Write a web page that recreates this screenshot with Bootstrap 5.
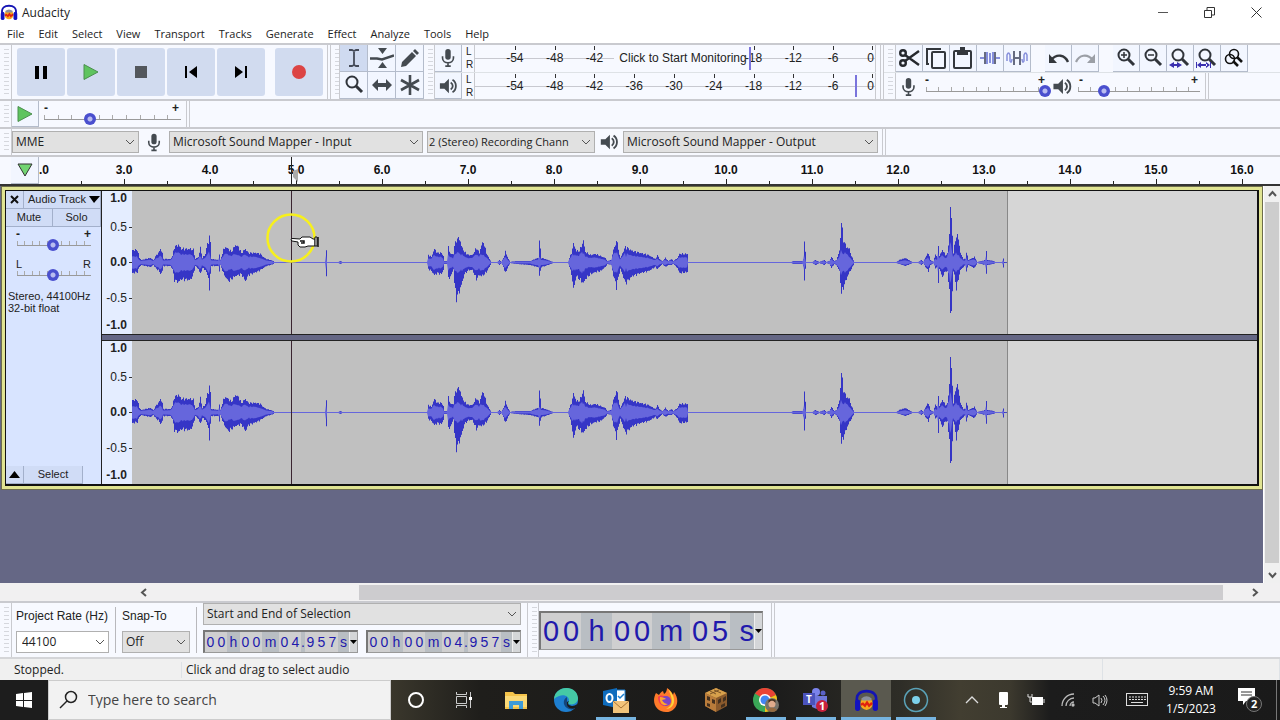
<!DOCTYPE html>
<html lang="en">
<head>
<meta charset="utf-8">
<meta name="viewport" content="width=device-width, initial-scale=1">
<title>Audacity</title>
<link href="https://cdn.jsdelivr.net/npm/bootstrap@5.3.0/dist/css/bootstrap.min.css" rel="stylesheet">
<script src="https://cdn.jsdelivr.net/npm/bootstrap@5.3.0/dist/js/bootstrap.bundle.min.js"></script>
<style>
:root{--ui:"Open Sans","Noto Sans",sans-serif;--ar:"Liberation Sans",Arial,sans-serif;--pane:#f7f9ff;--line:#c9cacf;--blue:#3f45cc}
body{font:12px/16px var(--ui);color:#222;background:var(--pane);overflow:hidden}
button,select,input{font:inherit;color:inherit}
button{border:0;padding:0;background:none}
svg{display:block;flex:none}
.titlebar{height:25px;background:#fff}
.titlebar .winbtn{width:47px;height:24px}
.menubar{height:18px;background:#fff;gap:14px;padding-left:7px;font-size:11px;line-height:17px}
.menubar a{color:#222;text-decoration:none;white-space:nowrap}
.arial{font-family:var(--ar)}
.toolrow{border-top:2px solid var(--line)}
.r56{height:56px}.r28{height:28px}
.grip{width:12px;flex:none;border-right:1px solid var(--line);background:repeating-linear-gradient(#d5d7dd 0 1px,transparent 1px 4px) 4px 4px/5px calc(100% - 8px) no-repeat}
.edge{width:4px;flex:none;border-left:1px solid var(--line);border-right:1px solid var(--line)}
.transport{gap:2px;padding-left:5px}
.tbtn{width:48px;height:48px;border-radius:3px;background:#d1dbef}
.toolgrid{grid-template-columns:repeat(3,28px);grid-template-rows:27px 27px}
.cellbtn{border-right:1px solid #b4bccb;border-bottom:1px solid #b4bccb;background:#f2f6ff;width:100%;height:100%;min-width:27px}
.cellbtn.on{background:#cfdaf0}
.meterrow{height:27px}
.mscale{flex:none;width:402px;position:relative;border-left:1px solid var(--line);border-right:1px solid var(--line);font:12px/14px var(--ar);padding-left:20px;background:linear-gradient(#c8c9d0,#c8c9d0) 0 13px/100% 1px no-repeat}
.mscale .ticks{display:grid;grid-template-columns:repeat(9,1fr);width:358px}
.mscale .lab{position:relative;text-align:center;padding-top:6px}
.mscale .lab::before{content:"";position:absolute;left:50%;top:1px;height:4px;border-left:1px solid #333}
.mscale .say{grid-column:span 3;padding-top:6px;text-align:center}
.mscale .say span{background:var(--pane);padding:0 5px;white-space:nowrap}
.mscale .zero{width:21px;text-align:right}
.mscale .zero::before{left:auto;right:1px}
.peak{position:absolute;top:2px;bottom:2px;width:2px;background:#7a74dc}
.sld{position:relative;height:27px;flex:none}
.sld::before{content:"";position:absolute;left:1px;right:1px;bottom:8px;height:5px;border-bottom:1px solid #999;background:repeating-linear-gradient(90deg,#aaa 0 1px,transparent 1px 10%)}
.sld .pm{position:absolute;top:0;font:bold 12px/14px var(--ar)}
.sld input{-webkit-appearance:none;appearance:none;position:absolute;left:0;bottom:3px;width:100%;height:12px;margin:0;background:none}
.sld input::-webkit-slider-thumb{-webkit-appearance:none;width:12px;height:12px;border-radius:50%;border:0;background:radial-gradient(circle,#b9bcf0 0 2px,#4a4fce 3px)}
.combo.form-select{font:inherit;padding:0 16px 0 3px;height:22px;border:1px solid #b0b0b0;border-radius:0;color:#222;background:#e1e1e1 url("data:image/svg+xml,%3Csvg xmlns='http://www.w3.org/2000/svg' viewBox='0 0 10 10'%3E%3Cpath d='M1 3l4 4 4-4' fill='none' stroke='%23555'/%3E%3C/svg%3E") right 3px center/10px 10px no-repeat;flex:none}
.combo.tight{padding:0 12px 0 1px;font-size:11px}
.combo.form-select.bg-white{padding-left:5px}
.ruler{height:31px;font:bold 12px/16px var(--ar);color:#111;border-bottom:2px solid #333}
.ruler .secs{overflow:hidden;position:relative;flex:1;min-width:0}
.ruler .sec{flex:0 0 86px;text-align:center;padding-top:5px;position:relative}
.ruler .sec::after{content:"";position:absolute;left:50%;bottom:0;height:5px;border-left:1px solid #222}
.ruler .sec::before{content:"";position:absolute;left:0;bottom:0;height:3px;border-left:1px solid #222}
.ruler .sec.part{flex-basis:42px;text-align:left}
.ruler .sec.part::after,.ruler .sec.part::before{display:none}
.canvas{background:#656785;min-width:0}
.track{border:1px solid #6d6d4c;background:#e0e492;padding:3px;margin:0 0 0 1px}
.track-in{border:1px solid #111;border-right-width:2px;border-bottom-width:2px;height:296px;position:relative}
.panel{width:96px;background:#d8e4ff;border-right:1px solid #222;font:11px/13px var(--ar)}
.pbtn{background:#d0dcf6;border-right:1px solid #a3b0cb;border-bottom:1px solid #a3b0cb;height:18px}
.panel .sld{width:76px;height:27px;margin-left:10px}
.panel .info{padding-left:2px;margin-top:6px;line-height:12px}
.vscale{width:30px;background:#e4edff;font:12px/14px var(--ar);text-align:right;padding-right:5px;position:relative}
.vscale i{position:absolute;right:0;width:3px;border-top:1px solid #333}
.chan{height:143px}
.gap6{height:7px;background:#656785;border-top:1px solid #222;border-bottom:1px solid #222}
.wavebox{background:#d6d6d6;min-width:0}
.pointer{position:absolute;left:257px;top:20px}
.vbar{width:17px;background:#f0f0f0;flex:none;border-left:1px solid #fff}
.vbar .thumb{background:#cdcdcd;width:14px}
.hbar{height:18px;background:#f1f0f1}
.hbar .thumb{background:#cdcccf;height:15px}
.digits{border:1px solid #999;border-top:2px solid #777;border-left:2px solid #777;background:#b9bec3;color:#2119ac;font:14px/20px var(--ar)}
.digits b{font-weight:400;text-align:center;flex:none;width:11px}
.digits b.n{background:#cfcfd0}
.digits b.h{width:13px}.digits b.m{width:17px}.digits b.p{width:4px}
.digits button{flex:1;background:#d4d6d8;border-left:1px solid #eee;color:#000;display:grid;place-items:center}
.big{font-size:29px;line-height:37px}
.big b{width:20px}.big b.h{width:31px}.big b.m{width:38px}.big b.s{width:24px;text-align:right}
.selcol{padding-bottom:4px}
.selcol .lbl{padding-top:5px}
.sep{width:1px;background:#b8b8bc;margin:4px 6px}
.lbl{font:12px/16px var(--ar);white-space:nowrap}
.status{height:23px;background:#f0f0f0;border-top:2px solid #d4d5d8}
.taskbar{height:40px;background:linear-gradient(90deg,#1d1d1d 0,#1d1d1d 380px,#3a372c 391px,#1f1e1b 480px,#1a1a1a 760px,#2e2d27 900px,#423e31 960px,#3c392e 1010px,#1c1c1c 1050px,#1a1a1a 100%);color:#fff}
.search{width:343px;background:#f2f2f2;color:#333;font-size:14px;border:1px solid #ccc}
.search input{border:0;background:none;outline:0;width:240px;color:#333;padding:0}
.search input::placeholder{color:#444;opacity:1}
.app{width:50px;height:40px;position:relative;display:grid;place-items:center;flex:none}
.app.run::after{content:"";position:absolute;left:5px;right:5px;bottom:0;height:3px;background:#76b4e0}
.app.cur{background:#5a594f}.app.cur::after{left:0;right:0}
.tray{width:32px;height:40px;display:grid;place-items:center}
</style>
</head>
<body class="d-flex flex-column vh-100">

<svg width="0" height="0" class="position-absolute" aria-hidden="true">
 <symbol id="logo" viewBox="0 0 24 22"><path d="M3 14C1 4 7 2 12 2s11 2 9 12" fill="none" stroke="#1414b4" stroke-width="2.500"/><ellipse cx="12" cy="14" rx="6" ry="6" fill="#f7a81c"/><path d="M7 9q5-4 10 0l-1 2H8z" fill="#8a8f9c"/><path d="M6.500 15l2-1 2 2 2-3 2 3 2-2 1 1" stroke="#e02010" stroke-width="2.200" fill="none"/><rect x="1" y="10" width="5" height="11" rx="2.500" fill="#1212c0"/><rect x="18" y="10" width="5" height="11" rx="2.500" fill="#1212c0"/></symbol>
 <symbol id="mic" viewBox="0 0 16 22"><rect x="5" y="1" width="6" height="12" rx="3" fill="#444a50"/><path d="M2 9v2c0 7 12 7 12 0V9M8 16v4M5 20h6" fill="none" stroke="#444a50" stroke-width="1.8"/></symbol>
 <symbol id="spk" viewBox="0 0 22 20"><path d="M2 7h5l5-5v16l-5-5H2z" fill="#444a50"/><path d="M14 6c3 2 3 6 0 8M16 3c5 3 5 11 0 14" fill="none" stroke="#444a50" stroke-width="2"/></symbol>
 <symbol id="lens" viewBox="0 0 22 22"><circle cx="9" cy="8" r="5.500" fill="none" stroke="#30343a" stroke-width="2"/><path d="M13 12l6 6" stroke="#30343a" stroke-width="3"/></symbol>
 <symbol id="play" viewBox="0 0 18 18"><path d="M2 1.500v15L16 9z" fill="#5fc45f" stroke="#4b8f4e"/></symbol>
</svg>

<header class="titlebar d-flex align-items-center">
 <svg width="18" height="17"><use href="#logo"/></svg>
 <span class="ms-1">Audacity</span>
 <div class="ms-auto d-flex">
  <button class="winbtn" aria-label="Minimize"><svg class="m-auto" width="10" height="10"><path d="M0 4.500h10" stroke="#555"/></svg></button>
  <button class="winbtn" aria-label="Restore"><svg class="m-auto" width="11" height="11" fill="none" stroke="#333"><path d="M.5 3.500h7v7h-7zM3 3V.5h7.500v7.500H8"/></svg></button>
  <button class="winbtn" aria-label="Close"><svg class="m-auto" width="11" height="11"><path d="M.5.5l10 10M10.500.5l-10 10" stroke="#333"/></svg></button>
 </div>
</header>
<nav class="menubar d-flex"><a href="#">File</a><a href="#">Edit</a><a href="#">Select</a><a href="#">View</a><a href="#">Transport</a><a href="#">Tracks</a><a href="#">Generate</a><a href="#">Effect</a><a href="#">Analyze</a><a href="#">Tools</a><a href="#">Help</a></nav>

<section class="toolrow r56 d-flex flex-shrink-0">
 <div class="grip"></div>
 <div class="transport d-flex align-items-center">
  <button class="tbtn" aria-label="Pause"><svg class="m-auto" width="14" height="15"><path d="M1 1h4v13H1zM9 1h4v13H9z"/></svg></button>
  <button class="tbtn" aria-label="Play"><svg class="m-auto" width="18" height="18"><use href="#play"/></svg></button>
  <button class="tbtn" aria-label="Stop"><svg class="m-auto" width="12" height="12"><path d="M0 0h12v12H0z" fill="#53575c"/></svg></button>
  <button class="tbtn" aria-label="Skip to start"><svg class="m-auto" width="14" height="14"><path d="M1 1h2v12H1zM13 1v12L5 7z"/></svg></button>
  <button class="tbtn" aria-label="Skip to end"><svg class="m-auto" width="14" height="14"><path d="M11 1h2v12h-2zM1 1v12l8-6z"/></svg></button>
  <button class="tbtn ms-2" aria-label="Record"><svg class="m-auto" width="14" height="14"><circle cx="7" cy="7" r="7" fill="#dc4444"/></svg></button>
 </div>
 <div class="edge ms-1"></div><div class="grip" style="width:9px"></div>
 <div class="toolgrid d-grid">
  <button class="cellbtn on" aria-label="Selection tool"><svg class="m-auto" width="12" height="18" fill="none" stroke="#444a58" stroke-width="1.800"><path d="M1 1h3l2 1 2-1h3M1 17h3l2-1 2 1h3M6 2v14"/></svg></button>
  <button class="cellbtn" aria-label="Envelope tool"><svg class="m-auto" width="24" height="20" fill="#444a50"><path d="M8 0h9l-4.500 6zM8 20h9l-4.500-6z"/><path d="M0 10.500h7l5 1 12-4" fill="none" stroke="#444a50" stroke-width="2.500"/></svg></button>
  <button class="cellbtn" aria-label="Draw tool"><svg class="m-auto" width="20" height="20"><path d="M1 19l1-5 10-10 4 4L6 18zM13 3l2-2 4 4-2 2z" fill="#444a50"/></svg></button>
  <button class="cellbtn" aria-label="Zoom tool"><svg class="m-auto" width="22" height="22"><use href="#lens"/></svg></button>
  <button class="cellbtn" aria-label="Time shift tool"><svg class="m-auto" width="20" height="14"><path d="M0 7l6-6v4h8V1l6 6-6 6V9H6v4z" fill="#444a50"/></svg></button>
  <button class="cellbtn" aria-label="Multi tool"><svg class="m-auto" width="20" height="20"><path d="M10 0v20M1 5l18 10M19 5L1 15" stroke="#444a50" stroke-width="2.600"/></svg></button>
 </div>
 <div class="grip" style="width:11px"></div>
 <div>
  <div class="meterrow d-flex">
   <div style="width:27px"><button class="cellbtn" aria-label="Record meter"><svg class="m-auto" width="16" height="20"><use href="#mic"/></svg></button></div>
   <div class="arial ps-1" style="width:12px;font-size:10px;line-height:13px">L<br>R</div>
   <div class="mscale"><div class="d-flex"><div class="ticks"><span class="lab">-54</span><span class="lab">-48</span><span class="lab">-42</span><span class="say"><span>Click to Start Monitoring</span></span><span class="lab">-18</span><span class="lab">-12</span><span class="lab">-6</span></div><span class="lab zero">0</span></div><div class="peak" style="left:274px"></div></div>
  </div>
  <div class="meterrow d-flex border-top">
   <div style="width:27px"><button class="cellbtn" aria-label="Playback meter"><svg class="m-auto" width="20" height="18"><use href="#spk"/></svg></button></div>
   <div class="arial ps-1" style="width:12px;font-size:10px;line-height:13px">L<br>R</div>
   <div class="mscale"><div class="d-flex"><div class="ticks"><span class="lab">-54</span><span class="lab">-48</span><span class="lab">-42</span><span class="lab">-36</span><span class="lab">-30</span><span class="lab">-24</span><span class="lab">-18</span><span class="lab">-12</span><span class="lab">-6</span></div><span class="lab zero">0</span></div><div class="peak" style="left:380px"></div></div>
  </div>
 </div>
 <div class="edge ms-1"></div>
 <div class="flex-grow-1">
  <div class="d-flex border-bottom" style="height:28px">
   <div class="grip"></div>
   <button class="cellbtn" style="width:27px" aria-label="Cut"><svg class="m-auto" width="21" height="20" fill="none" stroke="#26292e" stroke-width="2.400"><path d="M6 7l14 10M6 13L20 3"/><circle cx="4" cy="5" r="2.800"/><circle cx="4" cy="15" r="2.800"/></svg></button>
   <button class="cellbtn" style="width:27px" aria-label="Copy"><svg class="m-auto" width="20" height="22" fill="none" stroke="#33373c" stroke-width="2"><rect x="6" y="5" width="13" height="16" rx="1"/><path d="M3 17H1V2h13v1"/></svg></button>
   <button class="cellbtn" style="width:27px" aria-label="Paste"><svg class="m-auto" width="20" height="22" fill="none" stroke="#33373c" stroke-width="2"><rect x="1" y="4" width="17" height="17" rx="1"/><path d="M5 4h9v3H5zM8 3V1h3v2" fill="#33373c"/></svg></button>
   <button class="cellbtn" style="width:27px" aria-label="Trim"><svg class="m-auto" width="20" height="14" fill="none" stroke="#8790dc" stroke-width="2"><path d="M0 7h4M16 7h4M7 1v12M10 2v10M13 1v12"/><path d="M5 1v12M15 1v12" stroke="#666b80"/></svg></button>
   <button class="cellbtn" style="width:27px" aria-label="Silence"><svg class="m-auto" width="22" height="14" fill="none" stroke="#8790dc" stroke-width="1.500"><path d="M1 10V4q1.500-4 3 0v6q1.500 3 2-2M21 10V4q-1.500-4-3 0v6q-1.500 3-2-2"/><path d="M8 0v14M14 0v14M8 7h6" stroke="#666b80" stroke-width="2"/></svg></button>
   <button class="cellbtn" style="width:26px;margin-left:14px" aria-label="Undo"><svg class="m-auto" width="21" height="12" fill="none" stroke="#33373c" stroke-width="2.400"><path d="M3 8c6-7 14-5 17 2"/><path d="M1 2v9h8z" fill="#33373c" stroke="none"/></svg></button>
   <button class="cellbtn" style="width:27px" aria-label="Redo"><svg class="m-auto" width="21" height="12" fill="none" stroke="#9b9fa6" stroke-width="2.200"><path d="M18 8C12 1 4 3 1 10"/><path d="M20 2v9h-8z" fill="#9b9fa6" stroke="none"/></svg></button>
   <button class="cellbtn" style="width:26px;margin-left:14px" aria-label="Zoom in"><svg class="m-auto" width="22" height="22"><use href="#lens"/><path d="M6 8h6M9 5v6" stroke="#30343a" stroke-width="1.500"/></svg></button>
   <button class="cellbtn" style="width:27px" aria-label="Zoom out"><svg class="m-auto" width="22" height="22"><use href="#lens"/><path d="M6 8h6" stroke="#30343a" stroke-width="1.500"/></svg></button>
   <button class="cellbtn" style="width:27px" aria-label="Fit selection"><svg class="m-auto" width="22" height="22"><use href="#lens"/><path d="M0 18l5-3v6zM13 18l-5-3v6zM5 17h3v2H5z" fill="#3a30b0"/></svg></button>
   <button class="cellbtn" style="width:27px" aria-label="Fit project"><svg class="m-auto" width="22" height="22"><use href="#lens"/><path d="M0 15h1v6H0zM14 15h1v6h-1zM1 18l4-3v6zM14 18l-4-3v6zM4 17h7v2H4z" fill="#3a30b0"/></svg></button>
   <button class="cellbtn" style="width:27px" aria-label="Zoom toggle"><svg class="m-auto" width="20" height="20" fill="none" stroke="#111" stroke-width="1.600"><circle cx="10" cy="6" r="4.500"/><circle cx="6" cy="11" r="4.500"/><path d="M13 9l5 5M9 13l5 5" stroke-width="2.600"/></svg></button>
  </div>
  <div class="d-flex" style="height:26px">
   <div class="grip"></div>
   <svg class="ms-1 mt-1" width="17" height="20"><use href="#mic"/></svg>
   <div class="sld ms-2" style="width:126px"><span class="pm" style="left:0">-</span><span class="pm" style="right:6px">+</span><input type="range" value="100" aria-label="Recording volume"></div>
   <svg class="mt-1" width="22" height="19"><use href="#spk"/></svg>
   <div class="sld ms-1" style="width:124px"><span class="pm" style="left:2px">-</span><span class="pm" style="right:3px">+</span><input type="range" value="19" aria-label="Playback volume"></div>
   <div class="edge ms-1"></div>
  </div>
 </div>
</section>

<section class="toolrow r28 d-flex flex-shrink-0">
 <div class="grip"></div>
 <button class="cellbtn flex-shrink-0" style="width:27px" aria-label="Play at speed"><svg class="m-auto" width="18" height="18"><use href="#play"/></svg></button>
 <div class="sld ms-1" style="width:139px"><span class="pm" style="left:1px">-</span><span class="pm" style="right:3px">+</span><input type="range" value="32" aria-label="Playback speed"></div>
 <div class="edge ms-1"></div>
</section>

<section class="toolrow r28 d-flex flex-shrink-0 align-items-center">
 <div class="grip align-self-stretch"></div>
 <select class="form-select combo" style="width:127px" aria-label="Audio host"><option>MME</option></select>
 <svg class="mx-2" width="14" height="21"><use href="#mic"/></svg>
 <select class="form-select combo" style="width:254px" aria-label="Recording device"><option>Microsoft Sound Mapper - Input</option></select>
 <select class="form-select combo tight ms-1" style="width:168px" aria-label="Recording channels"><option>2 (Stereo) Recording Chann</option></select>
 <svg class="mx-1" width="20" height="20"><use href="#spk"/></svg>
 <select class="form-select combo" style="width:255px" aria-label="Playback device"><option>Microsoft Sound Mapper - Output</option></select>
 <div class="edge align-self-stretch ms-1"></div>
</section>

<section class="toolrow ruler d-flex flex-shrink-0">
 <div style="width:11px"></div>
 <div style="width:28px"><button class="cellbtn" aria-label="Pinned play head"><svg class="m-auto" width="16" height="15"><path d="M1 1h14L8 13z" fill="#72d472" stroke="#333"/></svg></button></div>
 <div class="secs d-flex" id="secs"><div class="sec part">.0</div><svg class="position-absolute" style="left:251px;top:0" width="10" height="28"><path d="M1.500 0v28" stroke="#222"/><path d="M3 14l5-2v13l-5-5z" fill="#aaa"/></svg></div>
</section>

<main class="d-flex flex-grow-1" style="min-height:0">
 <div class="canvas flex-grow-1">
  <div class="track">
   <div class="track-in d-flex">
    <aside class="panel flex-shrink-0 d-flex flex-column">
     <div class="d-flex"><button class="pbtn" style="width:18px" aria-label="Close track"><svg class="m-auto" width="9" height="9"><path d="M1 1l7 7M8 1L1 8" stroke="#111" stroke-width="2"/></svg></button><button class="pbtn flex-grow-1 d-flex align-items-center justify-content-between text-nowrap ps-1">Audio Track<svg width="12" height="7"><path d="M1 0h11L6 7z"/></svg></button></div>
     <div class="d-flex"><button class="pbtn" style="width:47px">Mute</button><button class="pbtn flex-grow-1">Solo</button></div>
     <div class="sld"><span class="pm" style="left:0">-</span><span class="pm" style="right:1px">+</span><input type="range" value="48" aria-label="Gain"></div>
     <div class="sld" style="margin-top:3px"><span class="pm fw-normal" style="left:0;font-size:11px">L</span><span class="pm fw-normal" style="right:1px;font-size:11px">R</span><input type="range" value="48" aria-label="Pan"></div>
     <div class="info text-nowrap">Stereo, 44100Hz<br>32-bit float</div>
     <div class="d-flex mt-auto"><button class="pbtn" style="width:18px" aria-label="Collapse"><svg class="m-auto" width="11" height="7"><path d="M0 7h11L5.500 0z"/></svg></button><button class="pbtn" style="width:59px">Select</button></div>
    </aside>
    <div class="flex-shrink-0">
     <div class="vscale chan"><b class="d-block">1.0</b><div style="margin-top:15px">0.5</div><b class="d-block" style="margin-top:21px">0.0</b><div style="margin-top:22px">-0.5</div><b class="d-block" style="margin-top:13px">-1.0</b><i style="top:36px"></i><i style="top:71px"></i><i style="top:107px"></i></div>
     <div class="gap6"></div>
     <div class="vscale chan"><b class="d-block">1.0</b><div style="margin-top:15px">0.5</div><b class="d-block" style="margin-top:21px">0.0</b><div style="margin-top:22px">-0.5</div><b class="d-block" style="margin-top:13px">-1.0</b><i style="top:36px"></i><i style="top:71px"></i><i style="top:107px"></i></div>
    </div>
    <div class="wavebox flex-grow-1">
     <svg class="wave w-100 chan" viewBox="0 0 1125 143" preserveAspectRatio="none"></svg>
     <div class="gap6"></div>
     <svg class="wave w-100 chan" viewBox="0 0 1125 143" preserveAspectRatio="none"></svg>
    </div>
    <svg class="pointer" width="60" height="56"><circle cx="28" cy="27" r="23.500" fill="none" stroke="#f7f01c" stroke-width="2.500"/><path d="M28 29q0-2 2-1.500l7 .5 2-2h8l3 2h2v7h-7l-3 1h-5l-2-2v-3l-6-1z" fill="#fff" stroke="#111"/><path d="M37 30h4v2h-3M55 26v10" fill="none" stroke="#111" stroke-width="1.500"/><path d="M52 26h2v9h-2z" fill="#fff" stroke="#111"/></svg>
   </div>
  </div>
 </div>
 <div class="vbar d-flex flex-column align-items-center justify-content-between">
  <svg class="my-1" width="9" height="8"><path d="M1 6l3.500-4L8 6" fill="none" stroke="#555" stroke-width="2"/></svg>
  <div class="thumb flex-grow-1"></div>
  <svg class="mt-2 mb-1" width="9" height="8"><path d="M1 2l3.500 4L8 2" fill="none" stroke="#555" stroke-width="2"/></svg>
 </div>
</main>

<div class="hbar d-flex align-items-center flex-shrink-0">
 <svg style="margin-left:140px;margin-right:211px" width="8" height="9"><path d="M6 1L2 4.500 6 8" fill="none" stroke="#555" stroke-width="2"/></svg>
 <div class="thumb flex-grow-1"></div>
 <svg style="margin-left:28px;margin-right:21px" width="8" height="9"><path d="M2 1l4 3.500L2 8" fill="none" stroke="#555" stroke-width="2"/></svg>
</div>

<section class="toolrow r56 d-flex flex-shrink-0">
 <div class="grip me-1"></div>
 <div class="selcol d-flex flex-column justify-content-between"><label class="lbl" for="rate">Project Rate (Hz)</label><select id="rate" class="form-select combo bg-white" style="width:93px"><option>44100</option></select></div>
 <div class="sep"></div>
 <div class="selcol d-flex flex-column justify-content-between"><label class="lbl" for="snap">Snap-To</label><select id="snap" class="form-select combo" style="width:68px"><option>Off</option></select></div>
 <div class="sep"></div>
 <div class="selcol d-flex flex-column justify-content-between">
  <select class="form-select combo" style="width:318px" aria-label="Selection format"><option>Start and End of Selection</option></select>
  <div class="d-flex justify-content-between"><div class="digits d-flex" style="width:155px;height:23px" data-t="00h00m04.957s"></div><div class="digits d-flex" style="width:155px;height:23px" data-t="00h00m04.957s"></div></div>
 </div>
 <div class="grip" style="margin-left:6px;border-left:1px solid var(--line)"></div>
 <div class="digits big d-flex align-self-center" style="width:224px;height:39px" data-t="00h00m05s"></div>
 <div class="edge ms-2"></div>
</section>

<footer class="status d-flex align-items-center flex-shrink-0"><span style="width:181px;padding-left:14px">Stopped.</span><span class="ps-1 border-start flex-grow-1">Click and drag to select audio</span><span class="border-start border-end h-100" style="width:178px"></span></footer>

<footer class="taskbar d-flex flex-shrink-0">
 <button class="app" style="width:48px" aria-label="Start"><svg width="16" height="16" fill="#fff"><path d="M0 2l7-1v7H0zM8 1l8-1v8H8zM0 9h7v6l-7-1zM8 9h8v7l-8-1z"/></svg></button>
 <label class="search d-flex align-items-center flex-shrink-0"><svg class="ms-2" style="margin-right:7px" width="24" height="20" fill="none" stroke="#222" stroke-width="1.500"><circle cx="14" cy="7" r="5.500"/><path d="M10 11l-7 7"/></svg><input type="text" placeholder="Type here to search" aria-label="Search"></label>
 <button class="app" aria-label="Cortana"><svg width="18" height="18"><circle cx="9" cy="9" r="7" fill="none" stroke="#fff" stroke-width="2"/></svg></button>
 <button class="app" aria-label="Task view"><svg class="me-1" width="18" height="16" fill="none" stroke="#ccc"><path d="M1.500 4.500h10v7h-10zM1.500 0v2.500h10V0M1.500 16v-2.500h10V16M15.500 0v16"/><path d="M14 5h3v3h-3z" fill="#fff" stroke="none"/></svg></button>
 <button class="app" aria-label="File Explorer"><svg width="22" height="18"><path d="M0 1h8l2 2h12v15H0z" fill="#f4c34a"/><path d="M0 5h22v11H0z" fill="#fad977"/><path d="M4 18v-8h14v8h-4v-4H8v4z" fill="#3e9bd8"/></svg></button>
 <button class="app" aria-label="Edge"><svg width="24" height="24"><circle cx="12" cy="12" r="12" fill="#1e7fd0"/><path d="M0 11C1-3 23-4 24 10c0 6-7 8-10 5 4-6-5-12-14-4z" fill="#45c9a5"/><path d="M13 9c-5 3-4 10 2 12 3 1 6 0 7-2-3 1-9 0-9-5z" fill="#14467c"/><path d="M15 13q-3 4 3 5c4 0 6-3 6-3l-2 5q-10 2-9-6z" fill="#1b1b1b"/></svg></button>
 <button class="app run" aria-label="Outlook"><svg width="26" height="25"><path d="M9 2h13v14H9z" fill="#fff" stroke="#1a7fd0"/><path d="M0 3l14-3v20L0 17z" fill="#0f6cbd"/><ellipse cx="6.500" cy="10" rx="3" ry="4" fill="none" stroke="#fff" stroke-width="2"/><path d="M15 8l2 2 4-4" fill="none" stroke="#1a7fd0" stroke-width="1.500"/><path d="M10 13h16v12H10z" fill="#f2c47b"/><path d="M10 13l8 7 8-7" fill="none" stroke="#a87436"/></svg></button>
 <button class="app" aria-label="Firefox"><svg width="24" height="24"><path d="M2 5l3 2c1-2 2-3 4-4l1 3c2-1 3-4 3-6 3 2 5 4 6 7l1-3c7 9 2 20-8 20C2 24-3 14 2 5z" fill="#ff7a2a"/><path d="M14 1c4 4 6 7 6 12 0 4-3 8-8 8 9-4 6-12 2-20z" fill="#ffd43a"/><path d="M4 9c2-2 5-2 8 0l-4 2c2 4 6 4 8 3-1 6-12 6-12-5z" fill="#f33c55"/><circle cx="12" cy="13" r="5" fill="#7b45c7"/><path d="M6 9c3 0 5 1 6 2l-4 1q2 4 6 4c-4 3-9 0-8-7z" fill="#ffa52e"/></svg></button>
 <button class="app" aria-label="Minecraft"><svg width="22" height="24"><path d="M11 0l11 5v13l-11 6-11-6V5z" fill="#8a5a2c"/><path d="M11 0l11 5-11 5L0 5z" fill="#d7a04c"/><path d="M0 5l11 5v14L0 18z" fill="#b97c3b"/><path d="M2 8l3 1v4l-3-1zM7 11l3 1v4l-3-1zM2 15l3 1v3l-3-1zM13 12l3-2v4l-3 2zM18 10l3-2v4l-3 2zM16 17l4-2v3l-4 2z" fill="#44301e"/><path d="M5 3l6 3M9 2l7 3M5 6l9-4" stroke="#7b5428"/></svg></button>
 <button class="app run" aria-label="Chrome"><svg width="26" height="24"><circle cx="12" cy="12" r="12" fill="#3aa757"/><path d="M12 12L2 5.500A12 12 0 0 1 23 7z" fill="#ea4335"/><path d="M12 12L23 7a12 12 0 0 1-11 17z" fill="#fbc116"/><circle cx="12" cy="12" r="6" fill="#fff"/><circle cx="12" cy="12" r="4.500" fill="#4285f4"/><circle cx="19" cy="17" r="7" fill="#77736a"/><circle cx="19" cy="16" r="3.500" fill="#e0ab8c"/><path d="M15.500 15q3.500-5 7 0v-3q-3-2-7 0z" fill="#493321"/><path d="M14 22q5-5 10 0-4 4-10 0z" fill="#95693f"/></svg></button>
 <button class="app run" aria-label="Teams"><svg width="26" height="24"><circle cx="13" cy="4" r="4" fill="#7b83eb"/><circle cx="20" cy="5" r="2.500" fill="#5b62c8"/><path d="M8 8h16v8q-6 8-15 3z" fill="#7078dc"/><path d="M0 5h12v12H0z" fill="#4b53bc"/><circle cx="19" cy="18" r="6" fill="#c9213c"/><text x="3" y="15" font-size="10" font-weight="700" fill="#fff">T</text><text x="16" y="22" font-size="11" font-weight="700" fill="#fff">1</text></svg></button>
 <button class="app run cur" aria-label="Audacity"><svg width="25" height="23"><use href="#logo"/></svg></button>
 <button class="app run" aria-label="Recorder"><svg width="26" height="26"><circle cx="13" cy="13" r="11.500" fill="none" stroke="#5aa2b8" stroke-width="1.500"/><circle cx="13" cy="13" r="4" fill="#7cd0ea"/></svg></button>
 <div class="ms-auto d-flex">
  <button class="tray" aria-label="Show hidden icons"><svg width="14" height="8"><path d="M1 7l6-6 6 6" fill="none" stroke="#ddd" stroke-width="1.300"/></svg></button>
  <span class="tray"><svg width="12" height="17" fill="#fff"><rect x="1" width="9" height="13" rx="1"/><path d="M4 13h3v2H4zM2 15h7v1H2z"/></svg></span>
  <span class="tray"><svg width="18" height="13"><path d="M5 3h11v8H5z" fill="#fff"/><path d="M17 5v4M1 0v3h4V0M3 3v5h3" stroke="#ddd" fill="none"/></svg></span>
  <span class="tray"><svg width="14" height="14" fill="none" stroke="#bbb" stroke-width="1.300"><path d="M1 13A12 12 0 0 1 13 1M5 13a8 8 0 0 1 8-8M9 13a4 4 0 0 1 4-4"/><circle cx="12" cy="12" r="1" fill="#fff"/></svg></span>
  <span class="tray"><svg width="16" height="13" fill="none" stroke="#ccc"><path d="M1 4h2l4-3v11L3 9H1zM9 4q2 2 0 5M11 2q4 4 0 9M13 1q4 5 0 11"/></svg></span>
  <span class="tray" style="width:42px"><svg width="23" height="14" fill="none" stroke="#ddd"><rect x=".5" y=".5" width="21" height="12"/><path d="M3 4h17M3 6.500h17" stroke-dasharray="2 1"/><path d="M5 9.500h12"/></svg></span>
  <div class="text-center" style="width:66px;line-height:18px;padding-top:2px">9:59 AM<br>1/5/2023</div>
  <button class="tray" style="width:52px" aria-label="Notifications"><svg width="26" height="24"><path d="M1 0h17v13H9l-3 4v-4H1z" fill="#fff"/><path d="M4 4h11M4 7h11" stroke="#333"/><circle cx="17" cy="16" r="7.500" fill="#222" stroke="#777"/><text x="14" y="20" font-size="11" font-weight="700" fill="#fff">2</text></svg></button>
  <div style="width:4px;border-left:1px solid #777"></div>
 </div>
</footer>

<script>
// time ruler labels
const secs = document.getElementById('secs');
for (let s = 3; s <= 16; s++) {
  const d = document.createElement('div');
  d.className = 'sec'; d.textContent = s + '.0';
  secs.insertBefore(d, secs.lastElementChild);
}
// time displays
document.querySelectorAll('.digits').forEach(box => {
  for (const c of box.dataset.t) {
    const b = document.createElement('b');
    b.textContent = c;
    b.className = /\d/.test(c) ? 'n' : c === '.' ? 'p' : c;
    box.append(b);
  }
  box.insertAdjacentHTML('beforeend', '<button aria-label="Format"><svg width="7" height="4"><path d="M0 0h7L3.500 4z"/></svg></button>');
});
// waveform envelope: x, upper level, lower level
const env = `132,12,10 137,12,9 139,4,4 141,2,2 145,3,3 150,4,4 153,2,2 156,7,6 158,9,7 160,13,11 162,9,8 163,3,3 166,3,3 170,3,3 172,6,6 174,15,17 178,17,19 181,13,16 190,13,17 193,12,11 195,3,3 198,5,6 200,14,11 202,4,5 205,8,7 207,19,12 208,18,15 209,28,26 210,18,12 211,3,3 218,2,3 219,8,8 220,2,2 223,12,10 225,15,14 228,13,18 231,10,16 235,17,13 238,15,12 241,9,11 245,13,18 248,9,12 256,9,9 260,8,7 263,5,5 266,3,3 270,2,2 273,1,1 274,0,0
325,0,0 326,12,13 327,0,0 338,0,0 340,1,1 342,0,0 427,0,0 428,7,6 431,5,8 434,13,12 437,9,10 441,9,11 443,6,7 444,1,1 447,1,1 448,15,15 450,8,14 453,8,6 454,16,20 456,22,35 459,24,28 461,16,22 464,10,11 468,7,7 472,7,7 476,14,16 479,9,12 481,17,13 483,20,12 486,9,9 489,3,4 491,0,0
497,0,0 499,2,2 501,0,0 503,4,4 505,10,10 508,3,3 510,0,0 516,1,1 530,1,2 537,4,4 538,4,4 539,21,13 541,4,4 545,3,3 550,1,1 553,0,0 568,0,0 569,4,4 571,9,11 573,18,26 576,11,13 579,11,16 583,21,20 585,10,16 590,7,11 595,8,9 600,6,8 605,4,4 607,1,1 611,2,2 613,13,13 615,16,19 616,24,24 618,12,14 620,4,6 623,11,14 625,15,20 632,11,13 640,9,10 648,7,8 655,3,4 657,7,6 659,3,4 662,1,1 665,4,4 668,1,2 671,3,2 673,1,1 677,4,5 679,8,10 687,8,9 688,0,0
791,0,0 793,1,1 802,1,1 803,3,3 804,19,19 805,10,6 806,0,0 812,0,0 815,2,2 819,0,0 824,2,2 826,0,0 829,1,1 831,5,5 834,1,1 836,2,2 839,11,8 841,40,30 843,22,24 846,15,16 849,13,9 851,6,6 854,0,0 896,0,0 899,2,1 905,4,3 910,1,1 912,0,0 918,0,0 921,2,2 923,0,0 925,5,4 928,9,8 930,2,2 933,0,0 935,8,5 937,4,4 938,18,18 939,6,6 942,12,14 945,7,8 947,8,9 949,28,26 950,53,52 951,44,48 953,9,8 955,22,18 956,26,26 958,24,16 960,9,7 963,3,4 965,3,2 966,10,8 968,2,2 974,5,5 977,0,0 981,1,1 985,2,2 986,12,10 987,2,2 993,1,1 995,0,0 1002,0,0 1003,4,4 1004,0,0`.split(/\s+/).map(t => t.split(',').map(Number));
const mid = 71, base = 132;
let up = '', dn = '', ru = '', rd = '', k = 0;
for (let x = base; x <= 1004; x++) {
  while (k < env.length - 2 && env[k + 1][0] <= x) k++;
  const [x0, u0, d0] = env[k], [x1, u1, d1] = env[k + 1];
  const f = Math.min(1, (x - x0) / (x1 - x0));
  const j = 1 + 0.13 * Math.sin(x * 12.9) * Math.cos(x * 4.1);
  const u = (u0 + (u1 - u0) * f) * j, d = (d0 + (d1 - d0) * f) * (2 - j);
  const r = Math.min(u, d) * (Math.max(u, d) > 20 ? .4 : .58);
  const px = x - base;
  up += `L${px} ${(mid - u).toFixed(1)}H${px + 1}`;
  dn = `L${px + 1} ${(mid + 1 + d).toFixed(1)}H${px}` + dn;
  ru += `L${px} ${(mid - r).toFixed(1)}`;
  rd = `L${px} ${(mid + 1 + r).toFixed(1)}` + rd;
}
document.querySelectorAll('.wave').forEach(s => s.innerHTML =
  `<path d="M0 0H875V143H0z" fill="#c0c0c0"/><path d="M875.500 0V143" stroke="#888"/>
   <path d="M0 ${mid + .5}H875" stroke="#4a4ac4"/>
   <path d="M0 ${mid}${up}${dn}z" fill="#3535c6"/><path d="M0 ${mid}${ru}${rd}z" fill="#6666dc"/>
   <path d="M159.500 0V143" stroke="#3a2430"/>`);
</script>
</body>
</html>
